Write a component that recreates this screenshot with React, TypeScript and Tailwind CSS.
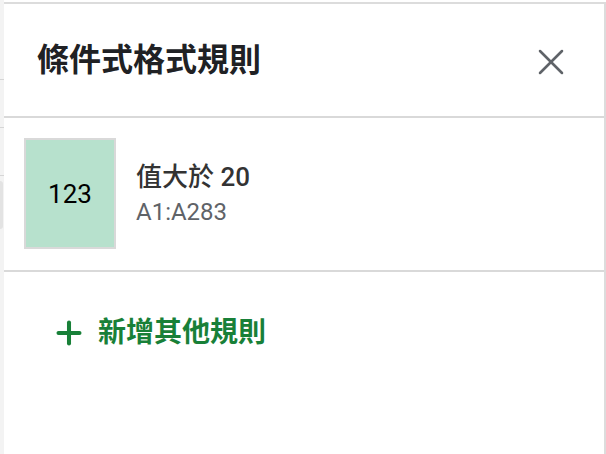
import { X, Plus } from "lucide-react";

const CJK = "font-['Roboto','Noto_Sans_CJK_TC',sans-serif]";

// thin strip of the sheet peeking out at the left edge
function SheetEdge() {
  return (
    <div className="flex w-[4px] shrink-0 flex-col bg-[#f3f3f3]">
      <div className="h-[80px] border-b border-[#d6d6d6]" />
      <div className="h-[48px] border-b border-[#d6d6d6]" />
      <div className="h-[48px] border-b border-[#d6d6d6]" />
      <div className="mt-[5px] h-[48px] w-[3px] rounded-r-[3px] bg-[#e3e3e3]" />
    </div>
  );
}

export default function App() {
  return (
    <div className={`flex h-[454px] w-[606px] overflow-hidden bg-white ${CJK}`}>
      <SheetEdge />
      <div className="mt-[2px] flex flex-1 flex-col border-t-2 border-r-2 border-[#dcdcdc] bg-white">
        {/* header */}
        <div className="flex h-[114px] shrink-0 items-center justify-between border-b-2 border-[#d9d9d9] pl-[33px] pr-[31px]">
          <h1 className="text-[32px] font-bold leading-none text-[#202124]">條件式格式規則</h1>
          <X className="mt-[4px] h-[44px] w-[44px] text-[#5f6368]" strokeWidth={1.4} />
        </div>

        {/* rule */}
        <div className="flex shrink-0 items-center gap-[20px] border-b-2 border-[#d9d9d9] pb-[21px] pl-[20px] pt-[20px]">
          <div className="flex h-[111px] w-[92px] items-center justify-center border-2 border-[#d9d9d9] bg-[#b7e1cd]">
            <span className="text-[26px] leading-none text-black">123</span>
          </div>
          <div className="flex flex-col gap-[10px]">
            <span className="text-[26px] font-medium leading-none text-[#333333]">值大於 20</span>
            <span className="text-[24px] leading-none text-[#5f6368]">A1:A283</span>
          </div>
        </div>

        {/* add */}
        <button className="mt-[43px] flex items-center gap-[11px] self-start pl-[47px] text-[#188038]">
          <Plus className="h-[36px] w-[36px]" strokeWidth={2.7} />
          <span className="text-[28px] font-bold leading-none">新增其他規則</span>
        </button>
      </div>
    </div>
  );
}
